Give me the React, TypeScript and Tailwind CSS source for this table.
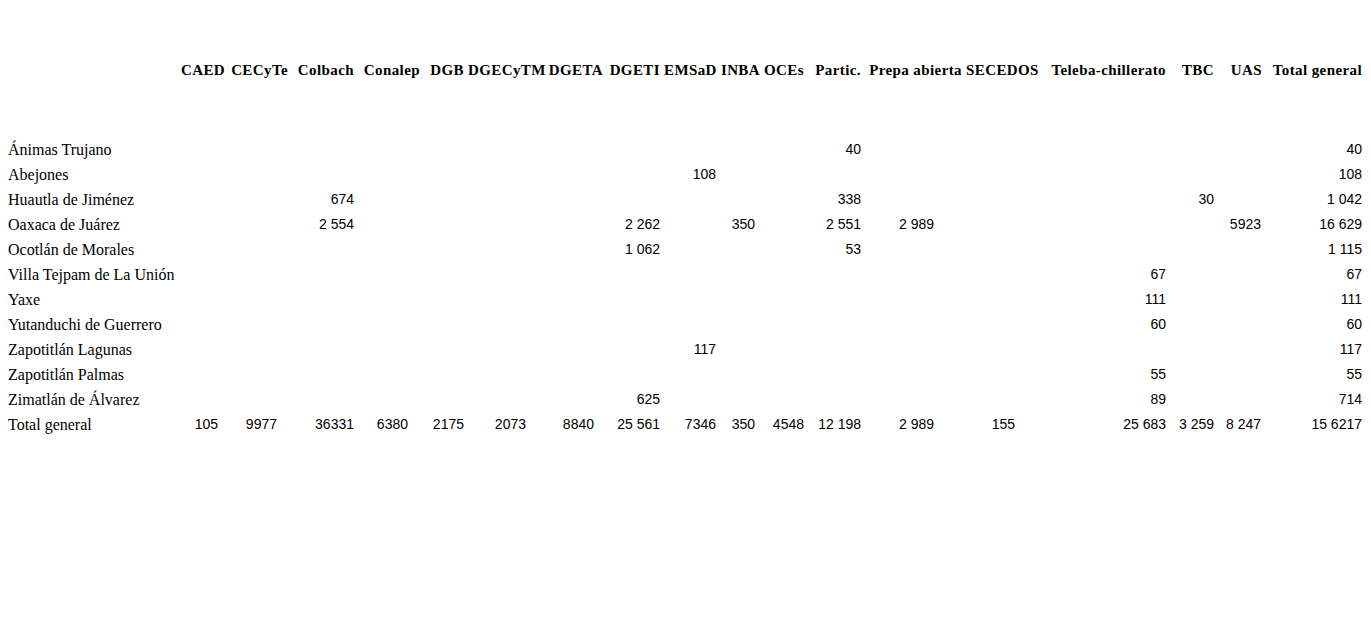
const columns = [
  "CAED",
  "CECyTe",
  "Colbach",
  "Conalep",
  "DGB",
  "DGECyTM",
  "DGETA",
  "DGETI",
  "EMSaD",
  "INBA",
  "OCEs",
  "Partic.",
  "Prepa abierta",
  "SECEDOS",
  "Teleba-chillerato",
  "TBC",
  "UAS",
  "Total general",
];

// right padding of the figures under each column
const numPad = [
  "pr-[11px]",
  "pr-[15px]",
  "pr-[4px]",
  "pr-[16px]",
  "pr-[4px]",
  "pr-[22px]",
  "pr-[13px]",
  "pr-[4px]",
  "pr-[4px]",
  "pr-[9px]",
  "pr-[4px]",
  "pr-[4px]",
  "pr-[32px]",
  "pr-[23px]",
  "pr-[4px]",
  "pr-[4px]",
  "pr-[5px]",
  "pr-[4px]",
];

type Row = { name: string; values: Record<number, string> };

const rows: Row[] = [
  { name: "Ánimas Trujano", values: { 11: "40", 17: "40" } },
  { name: "Abejones", values: { 8: "108", 17: "108" } },
  { name: "Huautla de Jiménez", values: { 2: "674", 11: "338", 15: "30", 17: "1 042" } },
  {
    name: "Oaxaca de Juárez",
    values: { 2: "2 554", 7: "2 262", 9: "350", 11: "2 551", 12: "2 989", 16: "5923", 17: "16 629" },
  },
  { name: "Ocotlán de Morales", values: { 7: "1 062", 11: "53", 17: "1 115" } },
  { name: "Villa Tejpam de La Unión", values: { 14: "67", 17: "67" } },
  { name: "Yaxe", values: { 14: "111", 17: "111" } },
  { name: "Yutanduchi de Guerrero", values: { 14: "60", 17: "60" } },
  { name: "Zapotitlán Lagunas", values: { 8: "117", 17: "117" } },
  { name: "Zapotitlán Palmas", values: { 14: "55", 17: "55" } },
  { name: "Zimatlán de Álvarez", values: { 7: "625", 14: "89", 17: "714" } },
  {
    name: "Total general",
    values: {
      0: "105",
      1: "9977",
      2: "36331",
      3: "6380",
      4: "2175",
      5: "2073",
      6: "8840",
      7: "25 561",
      8: "7346",
      9: "350",
      10: "4548",
      11: "12 198",
      12: "2 989",
      13: "155",
      14: "25 683",
      15: "3 259",
      16: "8 247",
      17: "15 6217",
    },
  },
];

const gridCols =
  "grid grid-cols-[173px_48px_63px_66px_66px_44px_80px_59px_57px_56px_44px_44px_57px_101px_72px_132px_48px_48px_100px]";

export default function App() {
  return (
    <div className="w-[1371px] h-[644px] bg-white text-black pl-[8px] pt-[58px] overflow-hidden">
      <div
        className={`${gridCols} leading-[25px] font-['Liberation_Serif',serif] font-bold text-[15px] tracking-[0.4px]`}
      >
        <div />
        {columns.map((c) => (
          <div key={c} className="text-right pr-[4px] whitespace-nowrap">
            {c}
          </div>
        ))}
      </div>

      <div className="mt-[54px]">
        {rows.map((r) => (
          <div key={r.name} className={`${gridCols} leading-[25px]`}>
            <div className="font-['Liberation_Serif',serif] text-[16px] whitespace-nowrap">{r.name}</div>
            {columns.map((c, i) => (
              <div
                key={c}
                className={`text-right whitespace-nowrap font-['Liberation_Sans',sans-serif] text-[14px] ${numPad[i]}`}
              >
                {r.values[i] ?? ""}
              </div>
            ))}
          </div>
        ))}
      </div>
    </div>
  );
}
